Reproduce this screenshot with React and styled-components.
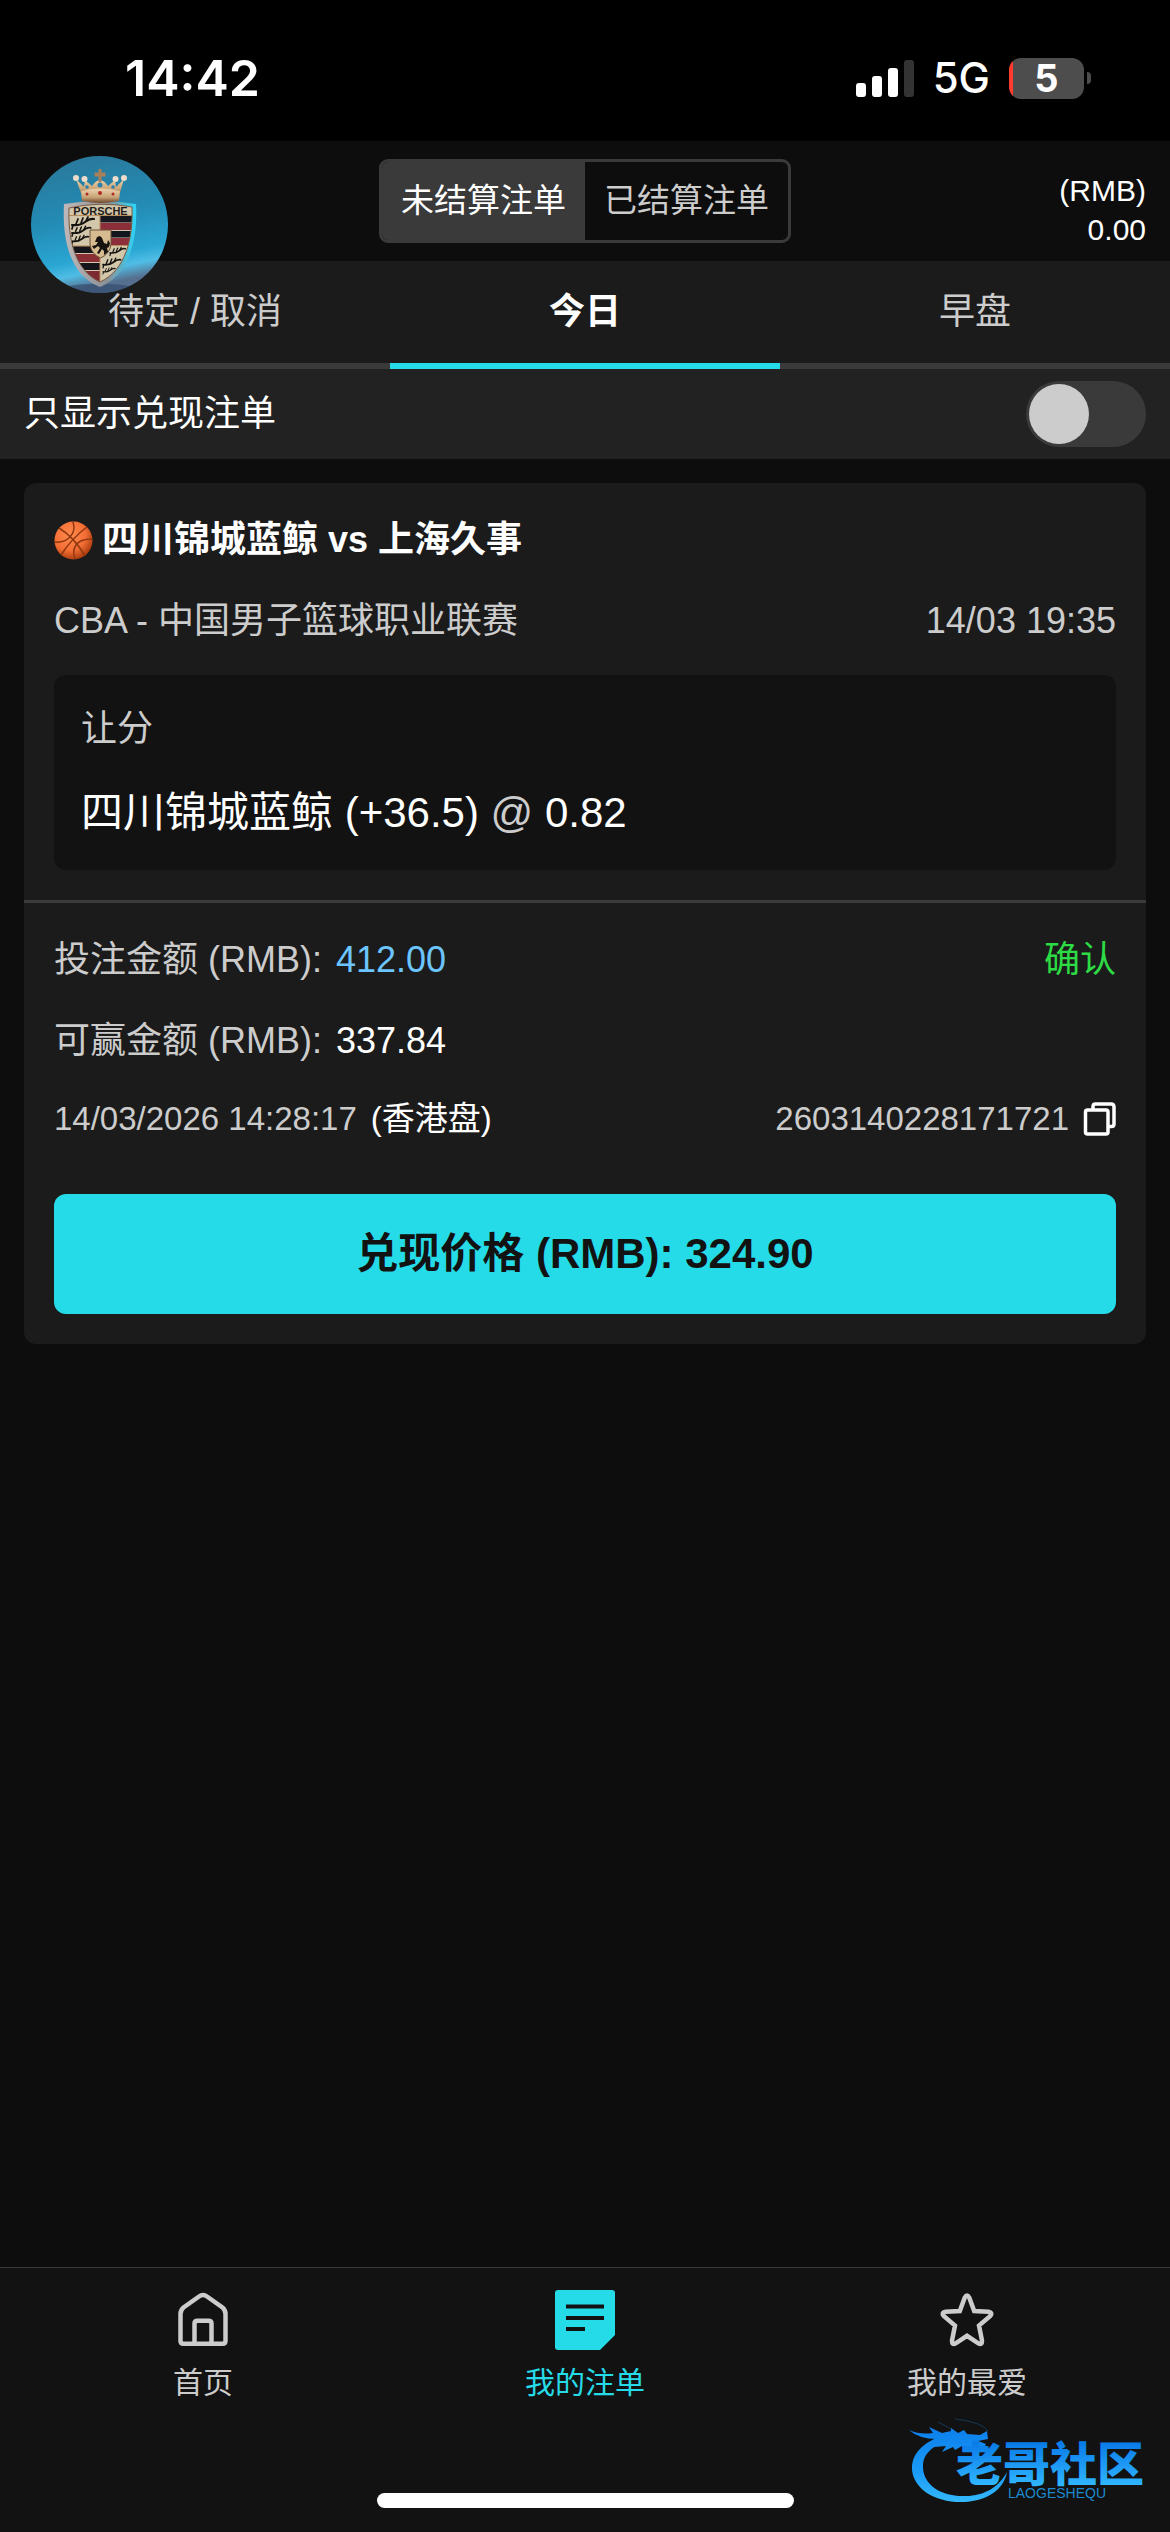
import React, { useState } from 'react';
import styled, { createGlobalStyle } from 'styled-components';

const color = {
  page: '#0d0d0d',
  panel: '#1b1b1b',
  inset: '#121212',
  bar: '#222222',
  line: '#3a3a3a',
  muted: '#cccccc',
  accent: '#26dbe8',
  link: '#6cc5ff',
  ok: '#2ddb45',
};

const GlobalStyle = createGlobalStyle`
  *, *::before, *::after { box-sizing: border-box; }
  body {
    margin: 0;
    background: ${color.page};
    color: #fff;
    font-family: "Liberation Sans", "Noto Sans CJK SC", sans-serif;
    font-size: 36px;
    line-height: 54px;
  }
  button { font: inherit; color: inherit; border: 0; padding: 0; background: none; cursor: pointer; }
  a { color: inherit; text-decoration: none; }
  svg { display: block; flex: none; }
`;

const Page = styled.div`
  display: flex;
  flex-direction: column;
  min-height: 100vh;
`;

/* ---------- status bar ---------- */
const StatusBar = styled.div`
  display: flex;
  justify-content: space-between;
  align-items: center;
  height: 141px;
  padding: 15px 79px 0 125px;
  background: #000;
  font-family: Inter, sans-serif;
`;

const Clock = styled.time`
  font-size: 50px;
  font-weight: 600;
`;

const StatusIcons = styled.div`
  display: flex;
  align-items: center;
  gap: 19px;
`;

const Network = styled.span`
  font-size: 42px;
  font-weight: 500;
`;

const Battery = styled.div`
  display: flex;
  align-items: center;
  gap: 3px;

  &::after {
    content: "";
    width: 4px;
    height: 12px;
    border-radius: 0 6px 6px 0;
    background: #4d4d4d;
  }
`;

const BatteryBody = styled.div`
  width: 75px;
  height: 41px;
  border-radius: 12px;
  background: linear-gradient(90deg, #ff3b30 4px, #4d4d4d 4px);
  text-align: center;
  font-size: 38px;
  font-weight: 700;
  line-height: 41px;
`;

/* ---------- header ---------- */
const Header = styled.header`
  display: grid;
  grid-template-columns: 1fr auto 1fr;
  align-items: center;
  height: 120px;
  padding: 0 24px;
`;

const AvatarButton = styled.button`
  position: relative;
  justify-self: start;
  width: 137px;
  height: 0;
  margin-left: 7px;

  svg { position: absolute; top: -45px; left: 0; }
`;

const Segmented = styled.div`
  display: flex;
  height: 84px;
  border: 3px solid ${color.line};
  border-radius: 9px;
  overflow: hidden;
`;

const Segment = styled.button`
  padding: 0 19px;
  font-size: 33px;
  color: ${(p) => (p.$active ? '#fff' : color.muted)};
  background: ${(p) => (p.$active ? color.line : 'transparent')};
`;

const Balance = styled.div`
  display: flex;
  flex-direction: column;
  padding-top: 18px;
  text-align: right;
  font-size: 30px;
  line-height: 39px;
`;

/* ---------- tabs and filter ---------- */
const Tabs = styled.nav`
  display: grid;
  grid-template-columns: repeat(3, 1fr);
  background: ${color.panel};
`;

const Tab = styled.button`
  display: flex;
  align-items: center;
  height: 108px;
  border-bottom: 6px solid ${(p) => (p.$active ? color.accent : color.line)};
  color: ${(p) => (p.$active ? '#fff' : color.muted)};
  font-weight: ${(p) => (p.$active ? 700 : 400)};

  span { flex: 1; }
  & + &::before {
    content: "";
    width: 3px;
    height: 54px;
    background: ${color.line};
  }
`;

const FilterRow = styled.label`
  display: flex;
  align-items: center;
  justify-content: space-between;
  height: 90px;
  padding: 0 24px;
  background: ${color.bar};
`;

const Switch = styled.input`
  appearance: none;
  width: 120px;
  height: 66px;
  margin: 0;
  padding: 3px;
  border-radius: 33px;
  background: ${color.line};
  cursor: pointer;

  &::before {
    content: "";
    display: block;
    width: 60px;
    height: 60px;
    border-radius: 50%;
    background: ${color.muted};
  }
  &:checked { background: ${color.accent}; }
  &:checked::before { margin-left: auto; }
`;

/* ---------- bet card ---------- */
const Main = styled.main`
  flex: 1;
  padding: 24px;
`;

const Card = styled.article`
  border-radius: 12px;
  background: ${color.panel};
`;

const CardSection = styled.section`
  display: flex;
  flex-direction: column;
  gap: 27px;
  padding: 30px;

  & + & { border-top: 3px solid ${color.line}; }
`;

const Title = styled.h2`
  display: flex;
  align-items: center;
  gap: 9px;
  margin: 0;
  font-size: 36px;
  font-weight: 700;
`;

const Row = styled.div`
  display: flex;
  justify-content: space-between;
  color: ${color.muted};
  font-size: ${(p) => (p.$small ? 33 : 36)}px;
  line-height: ${(p) => (p.$small ? 48 : 54)}px;
`;

const Pair = styled.div`
  display: flex;
  align-items: center;
  gap: 14px;
`;

const CopyButton = styled.button`
  display: flex;
`;

const Value = styled.span`
  color: ${(p) => p.$tone || '#fff'};
`;

const Pick = styled.div`
  display: flex;
  flex-direction: column;
  gap: 27px;
  padding: 27px;
  border-radius: 12px;
  background: ${color.inset};
`;

const Market = styled.div`
  color: ${color.muted};
`;

const Selection = styled.div`
  font-size: 42px;
  line-height: 60px;

  span { color: ${color.muted}; }
`;

const CashOut = styled.button`
  height: 120px;
  margin-top: 24px;
  border-radius: 12px;
  background: ${color.accent};
  color: #121212;
  font-size: 42px;
  font-weight: 700;
`;

/* ---------- bottom navigation ---------- */
const Footer = styled.footer`
  position: relative;
  display: flex;
  flex-direction: column;
  align-items: center;
  gap: 92px;
  padding: 22px 12px 24px;
  border-top: 1px solid ${color.line};
  background: ${color.inset};
`;

const NavBar = styled.nav`
  display: grid;
  grid-template-columns: repeat(3, 1fr);
  width: 100%;
`;

const NavLink = styled.a`
  display: flex;
  flex-direction: column;
  align-items: center;
  gap: 15px;
  color: ${(p) => (p.$active ? color.accent : color.muted)};
  font-size: 30px;
  line-height: 36px;
`;

const HomeIndicator = styled.div`
  width: 417px;
  height: 15px;
  border-radius: 8px;
  background: #fff;
`;

const Community = styled.div`
  position: absolute;
  right: 0;
  bottom: 12px;
`;

/* ---------- drawings ---------- */
const Signal = () => (
  <svg width="58" height="37" viewBox="0 0 58 37" fill="#fff">
    <rect x="0" y="23" width="10" height="14" rx="3" />
    <rect x="16" y="16" width="10" height="21" rx="3" />
    <rect x="32" y="8" width="10" height="29" rx="3" />
    <rect x="48" y="0" width="10" height="37" rx="3" fill="#333" />
  </svg>
);

const Antlers = ({ x, y, s = 1 }) => (
  <g transform={`translate(${x} ${y}) scale(${s})`} fill="none" stroke="#15130f" strokeLinecap="round">
    <path d="M0 7Q8 8 13 4T22 1" strokeWidth="2.200" />
    <path d="M4 6L6 1M9 5L11 0M14 3L16-1M1 7L0 11" strokeWidth="1.700" />
  </g>
);

const Avatar = () => (
  <svg width="137" height="137" viewBox="0 0 137 137">
    <defs>
      <linearGradient id="sky" x1="0" y1="0" x2="0.2" y2="1">
        <stop offset="0" stopColor="#2b7698" />
        <stop offset="0.5" stopColor="#238bb4" />
        <stop offset="0.8" stopColor="#2aa6d3" />
        <stop offset="0.9" stopColor="#50bde6" />
        <stop offset="1" stopColor="#55708f" />
      </linearGradient>
      <linearGradient id="rim" x1="0" y1="0" x2="1" y2="0">
        <stop offset="0" stopColor="#c0b8b8" />
        <stop offset="0.6" stopColor="#8c8f96" />
        <stop offset="1" stopColor="#29d6fa" />
      </linearGradient>
      <linearGradient id="gold" x1="0" y1="0" x2="0" y2="1">
        <stop offset="0" stopColor="#ecd2ad" />
        <stop offset="0.6" stopColor="#c9a477" />
        <stop offset="1" stopColor="#6b442b" />
      </linearGradient>
      <clipPath id="disc"><circle cx="68.500" cy="68.500" r="68.500" /></clipPath>
      <clipPath id="crest"><path d="M38 52Q69 45 101 51C102 82 95 114 69 126C43 114 37 82 38 52Z" /></clipPath>
    </defs>
    <g clipPath="url(#disc)">
      <rect width="137" height="137" fill="url(#sky)" />
      <path d="M30 131Q68 124 106 131V137H30Z" fill="#2f4568" opacity="0.6" />
      <path d="M33 48Q69 42 105 48C107 86 97 120 69 131C40 120 31 86 33 48Z" fill="url(#rim)" />
      <g clipPath="url(#crest)">
        <rect x="36" y="44" width="68" height="86" fill="#d2c6ab" />
        <rect x="69" y="59.500" width="34" height="7" fill="#171720" />
        <rect x="69" y="67" width="34" height="7" fill="#8d2f3b" />
        <rect x="69" y="75" width="34" height="6.500" fill="#11151d" />
        <rect x="69" y="82" width="34" height="7" fill="#8d2f3b" />
        <rect x="36" y="90" width="33" height="7" fill="#14141a" />
        <rect x="36" y="98" width="33" height="8" fill="#8a2e36" />
        <rect x="36" y="107" width="33" height="7" fill="#14141a" />
        <rect x="36" y="115" width="33" height="14" fill="#7d2932" />
        <path d="M69 59V128M36 90H69M69 89.500H103M36 59.500H103" stroke="#b78d5c" strokeWidth="1" />
        <Antlers x={41} y={62} />
        <Antlers x={41} y={71} s={0.85} />
        <Antlers x={41} y={80} s={0.75} />
        <Antlers x={79} y={92} s={0.7} />
        <Antlers x={72} y={103} s={0.8} />
        <Antlers x={72} y={112} s={0.55} />
      </g>
      <path d="M38 52Q69 45 101 51C102 82 95 114 69 126C43 114 37 82 38 52Z" fill="none" stroke="#765a43" />
      <text x="69.500" y="58.500" textAnchor="middle" fontFamily="Liberation Sans, sans-serif" fontWeight="700" fontSize="11" fill="#241d18">PORSCHE</text>
      <path d="M59 74H80V88Q79 98 69.500 102Q60 98 59 88Z" fill="#d6bb90" stroke="#6b5138" />
      <path d="M64 86L66 81L69 80L71 82L73 87L76 88L77 84L79 87L78 91L76 92L77 96L73 99L73 95L71 93L68 98L66 97L69 92L67 90L63 93L61 90L65 89L67 86Z" fill="#15120f" />
      <path d="M45 23L53 31L54 24L61 30Q65 24 69 24Q73 24 77 30L84 24L85 31L93 23L88 40H51Z" fill="url(#gold)" />
      <path d="M50 35Q69 30 89 35L88 45Q69 49 51 45Z" fill="url(#gold)" />
      <path d="M67.500 13H70.500V16.500H74.500V20.500H70.500V26H67.500V20.500H63.500V16.500H67.500Z" fill="#a97f58" />
      <g fill="#efdccb">
        <circle cx="45" cy="22" r="3" /><circle cx="53.500" cy="23" r="3" />
        <circle cx="84.500" cy="23" r="3" /><circle cx="93" cy="22" r="3" />
      </g>
      <g fill="#b02c25"><circle cx="56" cy="38" r="1.500" /><circle cx="69" cy="37" r="2" /><circle cx="82" cy="38" r="1.500" /></g>
      <g fill="#2f7fae"><circle cx="56" cy="31" r="1.800" /><circle cx="69" cy="29" r="2.500" /><circle cx="82" cy="31" r="1.800" /></g>
    </g>
  </svg>
);

const Basketball = () => (
  <svg width="39" height="39" viewBox="0 0 39 39">
    <defs>
      <radialGradient id="ball" cx="0.4" cy="0.35" r="0.68">
        <stop offset="0" stopColor="#ff8a4c" />
        <stop offset="0.6" stopColor="#f56f35" />
        <stop offset="1" stopColor="#a83a0d" />
      </radialGradient>
    </defs>
    <circle cx="19.500" cy="19.500" r="19" fill="url(#ball)" />
    <g fill="none" stroke="#8f3710" strokeWidth="1.500">
      <path d="M5 7Q20 16 31 35M33 6Q18 17 7 34" />
      <path d="M19 1Q22 10 16 16T1 21M38 18Q26 18 22 24T21 38" />
    </g>
  </svg>
);

const CopyIcon = () => (
  <svg width="33" height="34" viewBox="0 0 33 34" fill="none" stroke="#fff" strokeWidth="3.500" strokeLinejoin="round">
    <path d="M10 7V4.500Q10 2 12.500 2H28Q31 2 31 5V22Q31 24.500 28.500 24.500H26" />
    <rect x="2.500" y="8" width="22.500" height="24" rx="2" />
  </svg>
);

const HomeIcon = () => (
  <svg width="60" height="60" viewBox="0 0 60 60" fill="none" stroke="currentColor" strokeWidth="4.500">
    <path d="M7.500 51V24Q7.500 20 10.500 17.500L26 6.500Q30 3.500 34 6.500L49.500 17.500Q52.500 20 52.500 24V51Q52.500 53.700 49.500 53.700H10.500Q7.500 53.700 7.500 51Z" />
    <path d="M21.500 53V33.500Q21.500 30.700 24.500 30.700H35.500Q38.500 30.700 38.500 33.500V53" />
  </svg>
);

const BetsIcon = () => (
  <svg width="60" height="60" viewBox="0 0 60 60">
    <path d="M3 0H57Q60 0 60 3V45L45 60H3Q0 60 0 57V3Q0 0 3 0Z" fill="currentColor" />
    <path d="M11 16.500H49M11 28H49M11 39H30" stroke={color.inset} strokeWidth="4" />
  </svg>
);

const StarIcon = () => (
  <svg width="60" height="60" viewBox="0 0 60 60" fill="none" stroke="currentColor" strokeWidth="4.500">
    <path d="M27.800 7.500Q30 3.500 32.200 7.500L37.200 21L51.500 21.800Q56 22.500 53.300 26L42 35.500L45 50.500Q45.200 55.300 41.300 53.300L30 45.800L18.700 53.300Q14.800 55.300 15 50.500L18 35.500L6.700 26Q4 22.500 8.500 21.800L22.800 21Z" />
  </svg>
);

const CommunityLogo = () => (
  <svg width="280" height="110" viewBox="0 0 280 110" role="img" aria-label="老哥社区">
    <defs>
      <linearGradient id="tide" gradientUnits="userSpaceOnUse" x1="0" y1="20" x2="0" y2="92">
        <stop offset="0" stopColor="#0d80ec" />
        <stop offset="0.6" stopColor="#1a9cf8" />
        <stop offset="1" stopColor="#34b8fb" />
      </linearGradient>
      <linearGradient id="word" gradientUnits="userSpaceOnUse" x1="0" y1="34" x2="0" y2="74">
        <stop offset="0" stopColor="#0a7ce8" />
        <stop offset="1" stopColor="#2fb4ff" />
      </linearGradient>
    </defs>
    <path d="M48 27C30 35 21 46 22 60C24 79 45 93 74 92C98 91 114 79 117 62C109 77 94 86 76 86C51 87 34 75 33 58C32 46 40 37 55 32Z" fill="url(#tide)" />
    <path d="M19 20Q30 25 43 23L39 17L52 23L61 21L61 18L68 23L74 20L77 24L90 25L97 21L98 29L88 31L96 34L94 38L82 36L76 39L72 36L65 40L63 37L52 42L56 36L44 37L47 29Q29 29 19 20Z" fill="url(#tide)" />
    <path d="M48 12L61 19M65 9Q92 12 98 21" fill="none" stroke="#123955" strokeWidth="1" />
    <text x="66" y="71" fontFamily="Noto Sans CJK SC, sans-serif" fontWeight="900" fontSize="47" fill="url(#word)">老哥社区</text>
    <text x="118" y="88" fontFamily="Liberation Sans, sans-serif" fontSize="14" fill="#1c8ad0">LAOGESHEQU</text>
  </svg>
);

const tabs = ['待定 / 取消', '今日', '早盘'];
const segments = ['未结算注单', '已结算注单'];
const links = [
  { label: '首页', Icon: HomeIcon },
  { label: '我的注单', Icon: BetsIcon, active: true },
  { label: '我的最爱', Icon: StarIcon },
];

export default function App() {
  const [segment, setSegment] = useState(0);
  const [tab, setTab] = useState(1);

  return (
    <Page>
      <GlobalStyle />
      <StatusBar>
        <Clock>14:42</Clock>
        <StatusIcons>
          <Signal />
          <Network>5G</Network>
          <Battery><BatteryBody>5</BatteryBody></Battery>
        </StatusIcons>
      </StatusBar>

      <Header>
        <AvatarButton aria-label="账户"><Avatar /></AvatarButton>
        <Segmented>
          {segments.map((s, i) => (
            <Segment key={s} $active={segment === i} onClick={() => setSegment(i)}>{s}</Segment>
          ))}
        </Segmented>
        <Balance>
          <span>(RMB)</span>
          <span>0.00</span>
        </Balance>
      </Header>

      <Tabs>
        {tabs.map((t, i) => (
          <Tab key={t} $active={tab === i} onClick={() => setTab(i)}><span>{t}</span></Tab>
        ))}
      </Tabs>

      <FilterRow htmlFor="cashout-only">
        只显示兑现注单
        <Switch id="cashout-only" type="checkbox" />
      </FilterRow>

      <Main>
        <Card>
          <CardSection>
            <Title><Basketball />四川锦城蓝鲸 vs 上海久事</Title>
            <Row>
              <span>CBA - 中国男子篮球职业联赛</span>
              <span>14/03 19:35</span>
            </Row>
            <Pick>
              <Market>让分</Market>
              <Selection>四川锦城蓝鲸 (+36.5) <span>@</span> 0.82</Selection>
            </Pick>
          </CardSection>
          <CardSection>
            <Row>
              <Pair>投注金额 (RMB): <Value $tone={color.link}>412.00</Value></Pair>
              <Value $tone={color.ok}>确认</Value>
            </Row>
            <Row>
              <Pair>可赢金额 (RMB): <Value>337.84</Value></Pair>
            </Row>
            <Row $small>
              <Pair>14/03/2026 14:28:17 <Value>(香港盘)</Value></Pair>
              <Pair>
                2603140228171721
                <CopyButton aria-label="复制"><CopyIcon /></CopyButton>
              </Pair>
            </Row>
            <CashOut>兑现价格 (RMB): 324.90</CashOut>
          </CardSection>
        </Card>
      </Main>

      <Footer>
        <NavBar>
          {links.map(({ label, Icon, active }) => (
            <NavLink key={label} href="#" $active={active}>
              <Icon />
              {label}
            </NavLink>
          ))}
        </NavBar>
        <HomeIndicator />
        <Community><CommunityLogo /></Community>
      </Footer>
    </Page>
  );
}
